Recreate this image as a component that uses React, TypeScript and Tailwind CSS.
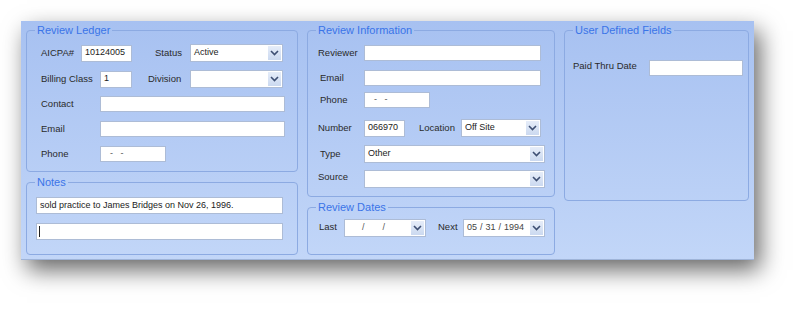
import React from "react";

const font = { fontFamily: '"Liberation Sans", Arial, sans-serif' };

function Chevron() {
  return (
    <svg width="9" height="6" viewBox="0 0 9 6">
      <path d="M1 1 L4.5 4.5 L8 1" fill="none" stroke="#3e4f73" strokeWidth="1.6" />
    </svg>
  );
}

function Input({ w, h = 16, children }: { w: number; h?: number; children?: React.ReactNode }) {
  return (
    <div
      className="bg-white border border-[#adbcd6] flex items-center pl-[3px] text-[9px] text-[#222] overflow-hidden whitespace-nowrap shrink-0"
      style={{ width: w, height: h }}
    >
      {children}
    </div>
  );
}

function Select({ w, h = 18, children }: { w: number; h?: number; children?: React.ReactNode }) {
  return (
    <div
      className="bg-white border border-[#adbcd6] flex items-stretch text-[9px] text-[#222] shrink-0 p-[1px]"
      style={{ width: w, height: h }}
    >
      <div className="flex-1 flex items-center pl-[2px] overflow-hidden whitespace-nowrap">{children}</div>
      <div className="w-[13px] bg-gradient-to-b from-[#e6edf9] to-[#cbd9f0] flex items-center justify-center">
        <Chevron />
      </div>
    </div>
  );
}

function Label({ w, children, className = "" }: { w: number; children: React.ReactNode; className?: string }) {
  return (
    <div className={"text-[9.5px] text-[#2a2a2a] shrink-0 leading-[12px] " + className} style={{ width: w }}>
      {children}
    </div>
  );
}

function Group({ title, h, className = "", children }: { title: string; h: number; className?: string; children: React.ReactNode }) {
  return (
    <fieldset
      className={"border border-[#8caae2] rounded-[4px] m-0 p-0 min-w-0 " + className}
      style={{ height: h }}
    >
      <legend className="ml-[8px] px-[2px] text-[11px] leading-[13px] text-[#3a74e8]">{title}</legend>
      {children}
    </fieldset>
  );
}

export default function App() {
  return (
    <div className="w-[809px] h-[314px] bg-white" style={font}>
      <div className="pl-[21px] pt-[21px]">
        <div className="w-[733px] h-[239px] bg-gradient-to-b from-[#a7c1f1] to-[#c2d6f8] border-b border-[#9fb4d8] shadow-[6px_10px_22px_rgba(0,0,0,0.6)] flex pl-[5px] pt-[3px] gap-[9px]">
          {/* Left column */}
          <div className="w-[272px] flex flex-col">
            <Group title="Review Ledger" h={148}>
              <div className="pl-[14px] pt-[7px] flex flex-col">
                <div className="flex items-center h-[18px]">
                  <Label w={40}>AICPA#</Label>
                  <Input w={51} h={17}>10124005</Input>
                  <Label w={35} className="ml-[23px]">Status</Label>
                  <Select w={93}>Active</Select>
                </div>
                <div className="flex items-center h-[18px] mt-[8px]">
                  <Label w={59}>Billing Class</Label>
                  <Input w={32} h={17}>1</Input>
                  <Label w={42} className="ml-[16px]">Division</Label>
                  <Select w={93} />
                </div>
                <div className="flex items-center h-[16px] mt-[8px]">
                  <Label w={59}>Contact</Label>
                  <Input w={185} />
                </div>
                <div className="flex items-center h-[16px] mt-[9px]">
                  <Label w={59}>Email</Label>
                  <Input w={185} />
                </div>
                <div className="flex items-center h-[16px] mt-[9px]">
                  <Label w={59}>Phone</Label>
                  <Input w={66}>
                    <span className="pl-[6px] text-[#555]">-&nbsp;&nbsp;&nbsp;-</span>
                  </Input>
                </div>
              </div>
            </Group>
            <Group title="Notes" h={79} className="mt-[4px]">
              <div className="pl-[9px] pt-[8px] flex flex-col">
                <Input w={247} h={17}>sold practice to James Bridges on Nov 26, 1996.</Input>
                <div className="mt-[9px]">
                  <Input w={247} h={17}>
                    <span className="w-[1px] h-[11px] bg-[#222] ml-[-1px]" />
                  </Input>
                </div>
              </div>
            </Group>
          </div>

          {/* Middle column */}
          <div className="w-[248px] flex flex-col">
            <Group title="Review Information" h={173}>
              <div className="pl-[10px] pt-[8px] flex flex-col">
                <div className="flex items-center h-[16px]">
                  <Label w={46}>Reviewer</Label>
                  <Input w={177} />
                </div>
                <div className="flex items-center h-[16px] mt-[9px]">
                  <Label w={46} className="pl-[2px]">Email</Label>
                  <Input w={177} />
                </div>
                <div className="flex items-center h-[16px] mt-[6px]">
                  <Label w={46} className="pl-[2px]">Phone</Label>
                  <Input w={66}>
                    <span className="pl-[6px] text-[#555]">-&nbsp;&nbsp;&nbsp;-</span>
                  </Input>
                </div>
                <div className="flex items-center h-[18px] mt-[11px]">
                  <Label w={46}>Number</Label>
                  <Input w={41} h={17}>066970</Input>
                  <Label w={42} className="ml-[14px]">Location</Label>
                  <Select w={80}>Off Site</Select>
                </div>
                <div className="flex items-center h-[18px] mt-[8px]">
                  <Label w={46} className="pl-[2px]">Type</Label>
                  <Select w={181}>Other</Select>
                </div>
                <div className="flex items-center h-[18px] mt-[7px]">
                  <Label w={46} className="mt-[-5px]">Source</Label>
                  <Select w={181} />
                </div>
              </div>
            </Group>
            <Group title="Review Dates" h={54} className="mt-[4px]">
              <div className="pl-[11px] pt-[5px] flex items-center h-[23px]">
                <Label w={25} className="mt-[-2px]">Last</Label>
                <Select w={82}>
                  <span className="pl-[14px] text-[#555]">/</span>
                  <span className="pl-[18px] text-[#555]">/</span>
                </Select>
                <Label w={25} className="ml-[12px] mt-[-2px]">Next</Label>
                <Select w={82}>
                  <span className="text-[#444]">05</span>
                  <span className="text-[#444] ml-[3px]">/</span>
                  <span className="text-[#444] ml-[3px]">31</span>
                  <span className="text-[#444] ml-[3px]">/</span>
                  <span className="text-[#444] ml-[3px]">1994</span>
                </Select>
              </div>
            </Group>
          </div>

          {/* Right column */}
          <div className="w-[185px] flex flex-col">
            <Group title="User Defined Fields" h={177}>
              <div className="pl-[8px] pt-[23px] flex items-center h-[39px]">
                <Label w={76} className="mt-[-4px]">Paid Thru Date</Label>
                <Input w={94} />
              </div>
            </Group>
          </div>
        </div>
      </div>
    </div>
  );
}
